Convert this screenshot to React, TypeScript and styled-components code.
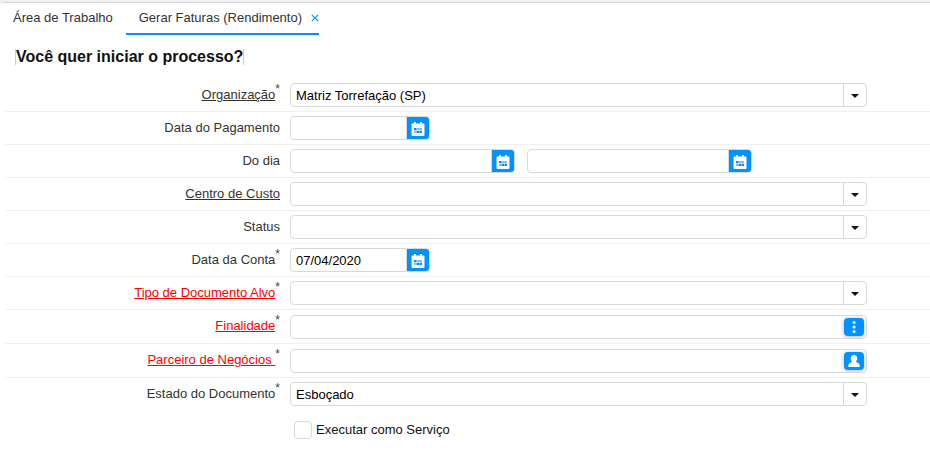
import React, { useState } from "react";
import styled, { createGlobalStyle } from "styled-components";

const BLUE = "#0093ff";
const LINE = "#d9d9d9";

const GlobalStyle = createGlobalStyle`
  * { box-sizing: border-box; }
  body {
    margin: 0;
    background: #fff;
    color: #333;
    font-family: "Liberation Sans", Arial, sans-serif;
    font-size: 13px;
    line-height: 16px;
  }
  button, input, select { font: inherit; color: #000; margin: 0; }
`;

const Page = styled.main`
  border-top: 2px solid #f0f0f2;
`;

const TabBar = styled.nav`
  display: flex;
  height: 33px;
  border-top: 1px solid #d5d5d5;
  border-top-left-radius: 3px;
`;

const Tab = styled.div<{ $active?: boolean }>`
  display: flex;
  align-items: center;
  gap: 9px;
  padding: 0 ${(p) => (p.$active ? 0 : 13)}px 0 13px;
  border-bottom: 2px solid ${(p) => (p.$active ? BLUE : "transparent")};
`;

const TabButton = styled.button`
  padding: 0;
  border: 0;
  background: none;
  color: #333;
  white-space: nowrap;
`;

const CloseButton = styled.button`
  display: flex;
  padding: 0;
  border: 0;
  background: none;
`;

const Title = styled.h1`
  width: fit-content;
  margin: 14px 0 14px 15px;
  border: solid #ccc;
  border-width: 0 1px;
  color: #111;
  font-size: 16px;
  line-height: 16px;
  font-weight: bold;
`;

const Form = styled.form`
  margin-left: 5px;
`;

const Row = styled.div<{ $lookup?: boolean; $last?: boolean }>`
  display: grid;
  grid-template-columns: minmax(0, 275fr) minmax(0, 577fr) minmax(0, 53fr);
  column-gap: 10px;
  height: ${(p) => (p.$lookup ? 34 : 33)}px;
  padding-top: 4px;
  border-bottom: 1px solid ${(p) => (p.$last ? "transparent" : "#f0f0f0")};
`;

const LabelCell = styled.div`
  display: flex;
  justify-content: flex-end;
  align-items: flex-start;
  padding-top: 4px;
  white-space: pre;
`;

const Label = styled.label<{ $linked?: boolean; $missing?: boolean }>`
  color: ${(p) => (p.$missing ? "#f00" : "#333")};
  text-decoration: ${(p) => (p.$linked ? "underline" : "none")};
`;

const Star = styled.span`
  margin-top: -6px;
  color: #444;
  font-size: 12px;
`;

const FieldCell = styled.div<{ $lookup?: boolean }>`
  display: flex;
  align-items: flex-start;
  gap: 12px;
  padding-top: ${(p) => (p.$lookup ? 1 : 0)}px;
`;

const Box = styled.div<{ $size?: "date" | "range" }>`
  display: grid;
  grid-template-columns: minmax(0, 1fr) auto;
  flex: 0 1 ${(p) => (p.$size === "date" ? "140px" : p.$size === "range" ? "225px" : "100%")};
  min-width: 0;
  height: 24px;
  border: 1px solid ${LINE};
  border-radius: 4px;
  overflow: hidden;
  background: #fff;
`;

const TextInput = styled.input`
  grid-area: 1 / 1;
  min-width: 0;
  width: 100%;
  padding: 2px 5px 0;
  border: 0;
  background: none;
  outline: none;
`;

const Select = styled.select`
  grid-area: 1 / 1 / 2 / 3;
  width: 100%;
  padding: 2px 28px 0 5px;
  border: 0;
  background: none;
  appearance: none;
  outline: none;
`;

const Arrow = styled.span`
  grid-area: 1 / 2;
  display: flex;
  align-items: center;
  justify-content: center;
  width: 23px;
  border-left: 1px solid ${LINE};
  pointer-events: none;
  padding-top: 2px;
`;

const CalendarButton = styled.button`
  grid-area: 1 / 2;
  display: flex;
  align-items: center;
  justify-content: center;
  width: 23px;
  padding: 2px 0 0;
  border: 0;
  border-left: 1px solid ${LINE};
  background: ${BLUE};
`;

const LookupButton = styled.button`
  grid-area: 1 / 2;
  display: flex;
  align-items: center;
  justify-content: center;
  width: 20px;
  height: 18px;
  margin: 2px 2px 0 0;
  padding: 0;
  border: 0;
  border-radius: 4px;
  background: ${BLUE};
  box-shadow: 0 1px 4px rgba(0, 0, 0, 0.3);
`;

const CheckLabel = styled.label`
  grid-column: 2;
  display: flex;
  align-items: center;
  gap: 4px;
  padding: 2px 0 0 4px;
  color: #111;
`;

const Checkbox = styled.input`
  appearance: none;
  width: 18px;
  height: 18px;
  border: 1px solid ${LINE};
  border-radius: 4px;
  background: #fff;
  &:checked { background: ${BLUE}; }
`;

const CalendarIcon = () => (
  <svg width="14" height="14" viewBox="0 0 14 14" aria-hidden="true">
    <path fill="#fff" d="M1.500 1.500H3V0h2v1.500h4V0h2v1.500h1.500q1 0 1 1V13q0 1-1 1h-11q-1 0-1-1V2.500q0-1 1-1z" />
    <path fill="#7cc3fa" d="M3 6h8v5H3z" />
    <path fill="#1683e8" d="M3 6h2v2H3zM9 9h2v2H9zM6 9h2v2H6z" />
    <path fill="#c4e4fd" d="M3 8h8v1H3z" />
  </svg>
);

const ArrowIcon = () => (
  <svg width="8" height="4" viewBox="0 0 8 4" aria-hidden="true">
    <path d="M0 0h8L4 4z" fill="#111" />
  </svg>
);

const DotsIcon = () => (
  <svg width="4" height="12" viewBox="0 0 4 12" fill="#fff" aria-hidden="true">
    <circle cx="2" cy="1.500" r="1.500" />
    <circle cx="2" cy="6" r="1.500" />
    <circle cx="2" cy="10.500" r="1.500" />
  </svg>
);

const PersonIcon = () => (
  <svg width="12" height="12" viewBox="0 0 12 12" aria-hidden="true">
    <path
      fill="#fff"
      d="M6 0C8 0 9.300 1.400 9.300 3.200c0 1.300-.6 2.300-1.300 3 .1.500.5.8 1.300 1.200C11 8.200 11.800 9.200 11.800 12H.2c0-2.800.8-3.800 2.500-4.600.8-.4 1.200-.7 1.300-1.200-.7-.7-1.300-1.700-1.300-3C2.700 1.400 4 0 6 0z"
    />
  </svg>
);

type Field = {
  id: string;
  label: string;
  kind: "select" | "date" | "range" | "dots" | "person";
  value?: string;
  linked?: boolean;
  required?: boolean;
  missing?: boolean;
};

const fields: Field[] = [
  { id: "org", label: "Organização", kind: "select", value: "Matriz Torrefação (SP)", linked: true, required: true },
  { id: "payment", label: "Data do Pagamento", kind: "date" },
  { id: "day", label: "Do dia", kind: "range" },
  { id: "cost", label: "Centro de Custo", kind: "select", linked: true },
  { id: "status", label: "Status", kind: "select" },
  { id: "account", label: "Data da Conta", kind: "date", value: "07/04/2020", required: true },
  { id: "target", label: "Tipo de Documento Alvo", kind: "select", linked: true, required: true, missing: true },
  { id: "purpose", label: "Finalidade", kind: "dots", linked: true, required: true, missing: true },
  { id: "partner", label: "Parceiro de Negócios ", kind: "person", linked: true, required: true, missing: true },
  { id: "state", label: "Estado do Documento", kind: "select", value: "Esboçado", required: true },
];

const DateBox = ({ id, size, value, name }: { id: string; size: "date" | "range"; value?: string; name?: string }) => (
  <Box $size={size}>
    <TextInput id={id} defaultValue={value} aria-label={name} />
    <CalendarButton type="button" aria-label="Abrir calendário">
      <CalendarIcon />
    </CalendarButton>
  </Box>
);

const Control = ({ field }: { field: Field }) => {
  switch (field.kind) {
    case "select":
      return (
        <Box>
          <Select id={field.id} defaultValue={field.value ?? ""}>
            <option>{field.value ?? ""}</option>
          </Select>
          <Arrow>
            <ArrowIcon />
          </Arrow>
        </Box>
      );
    case "date":
      return <DateBox id={field.id} size="date" value={field.value} />;
    case "range":
      return (
        <>
          <DateBox id={field.id} size="range" />
          <DateBox id={`${field.id}-end`} size="range" name="Até o dia" />
        </>
      );
    default:
      return (
        <Box>
          <TextInput id={field.id} />
          <LookupButton type="button" aria-label={`Procurar ${field.label}`}>
            {field.kind === "dots" ? <DotsIcon /> : <PersonIcon />}
          </LookupButton>
        </Box>
      );
  }
};

export default function App() {
  const [asService, setAsService] = useState(false);
  return (
    <>
      <GlobalStyle />
      <Page>
        <TabBar>
          <Tab>
            <TabButton type="button">Área de Trabalho</TabButton>
          </Tab>
          <Tab $active>
            <TabButton type="button">Gerar Faturas (Rendimento)</TabButton>
            <CloseButton type="button" aria-label="Fechar">
              <svg width="8" height="8" viewBox="0 0 8 8" aria-hidden="true">
                <path d="M.8.8l6.400 6.400M7.200.8L.8 7.200" stroke={BLUE} strokeWidth="1.200" />
              </svg>
            </CloseButton>
          </Tab>
        </TabBar>
        <Title>Você quer iniciar o processo?</Title>
        <Form>
          {fields.map((field, i) => {
            const lookup = field.kind === "dots" || field.kind === "person";
            return (
              <Row key={field.id} $lookup={lookup} $last={i === fields.length - 1}>
                <LabelCell>
                  <Label htmlFor={field.id} $linked={field.linked} $missing={field.missing}>
                    {field.label}
                  </Label>
                  {field.required && <Star>*</Star>}
                </LabelCell>
                <FieldCell $lookup={lookup}>
                  <Control field={field} />
                </FieldCell>
              </Row>
            );
          })}
          <Row $last>
            <CheckLabel>
              <Checkbox type="checkbox" checked={asService} onChange={(e) => setAsService(e.target.checked)} />
              Executar como Serviço
            </CheckLabel>
          </Row>
        </Form>
      </Page>
    </>
  );
}
